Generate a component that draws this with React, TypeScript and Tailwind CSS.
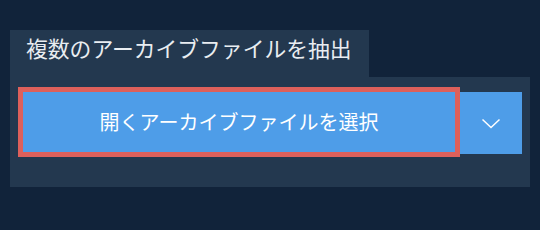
import React from "react";

export default function App() {
  return (
    <div
      className="w-[540px] h-[230px] bg-[#11233a] pt-[30px] pl-[10px]"
      style={{ fontFamily: '"Noto Sans CJK JP", "Noto Sans", sans-serif' }}
    >
      <div className="w-[359px] h-[47px] bg-[#23384f] pl-[16px] pt-[4px] text-[21.8px] leading-[28px] text-[#e9edf1] whitespace-nowrap">
        複数のアーカイブファイルを抽出
      </div>
      <div className="w-[520px] h-[110px] bg-[#23384f] pt-[15px] pl-[13px]">
        <div className="flex items-start">
          <button className="w-[432px] h-[60px] bg-[#4e9de8] outline-[5px] outline-solid outline-[#dd605b] text-white text-[20px] leading-[28px] flex items-center justify-center">
            開くアーカイブファイルを選択
          </button>
          <button className="ml-[5px] w-[62px] h-[62px] bg-[#4e9de8] flex items-center justify-center">
            <svg width="20" height="11" viewBox="0 0 20 11" fill="none">
              <path d="M1.5 1.5 L10 9.5 L18.5 1.5" stroke="white" strokeWidth="1.5" />
            </svg>
          </button>
        </div>
      </div>
    </div>
  );
}
